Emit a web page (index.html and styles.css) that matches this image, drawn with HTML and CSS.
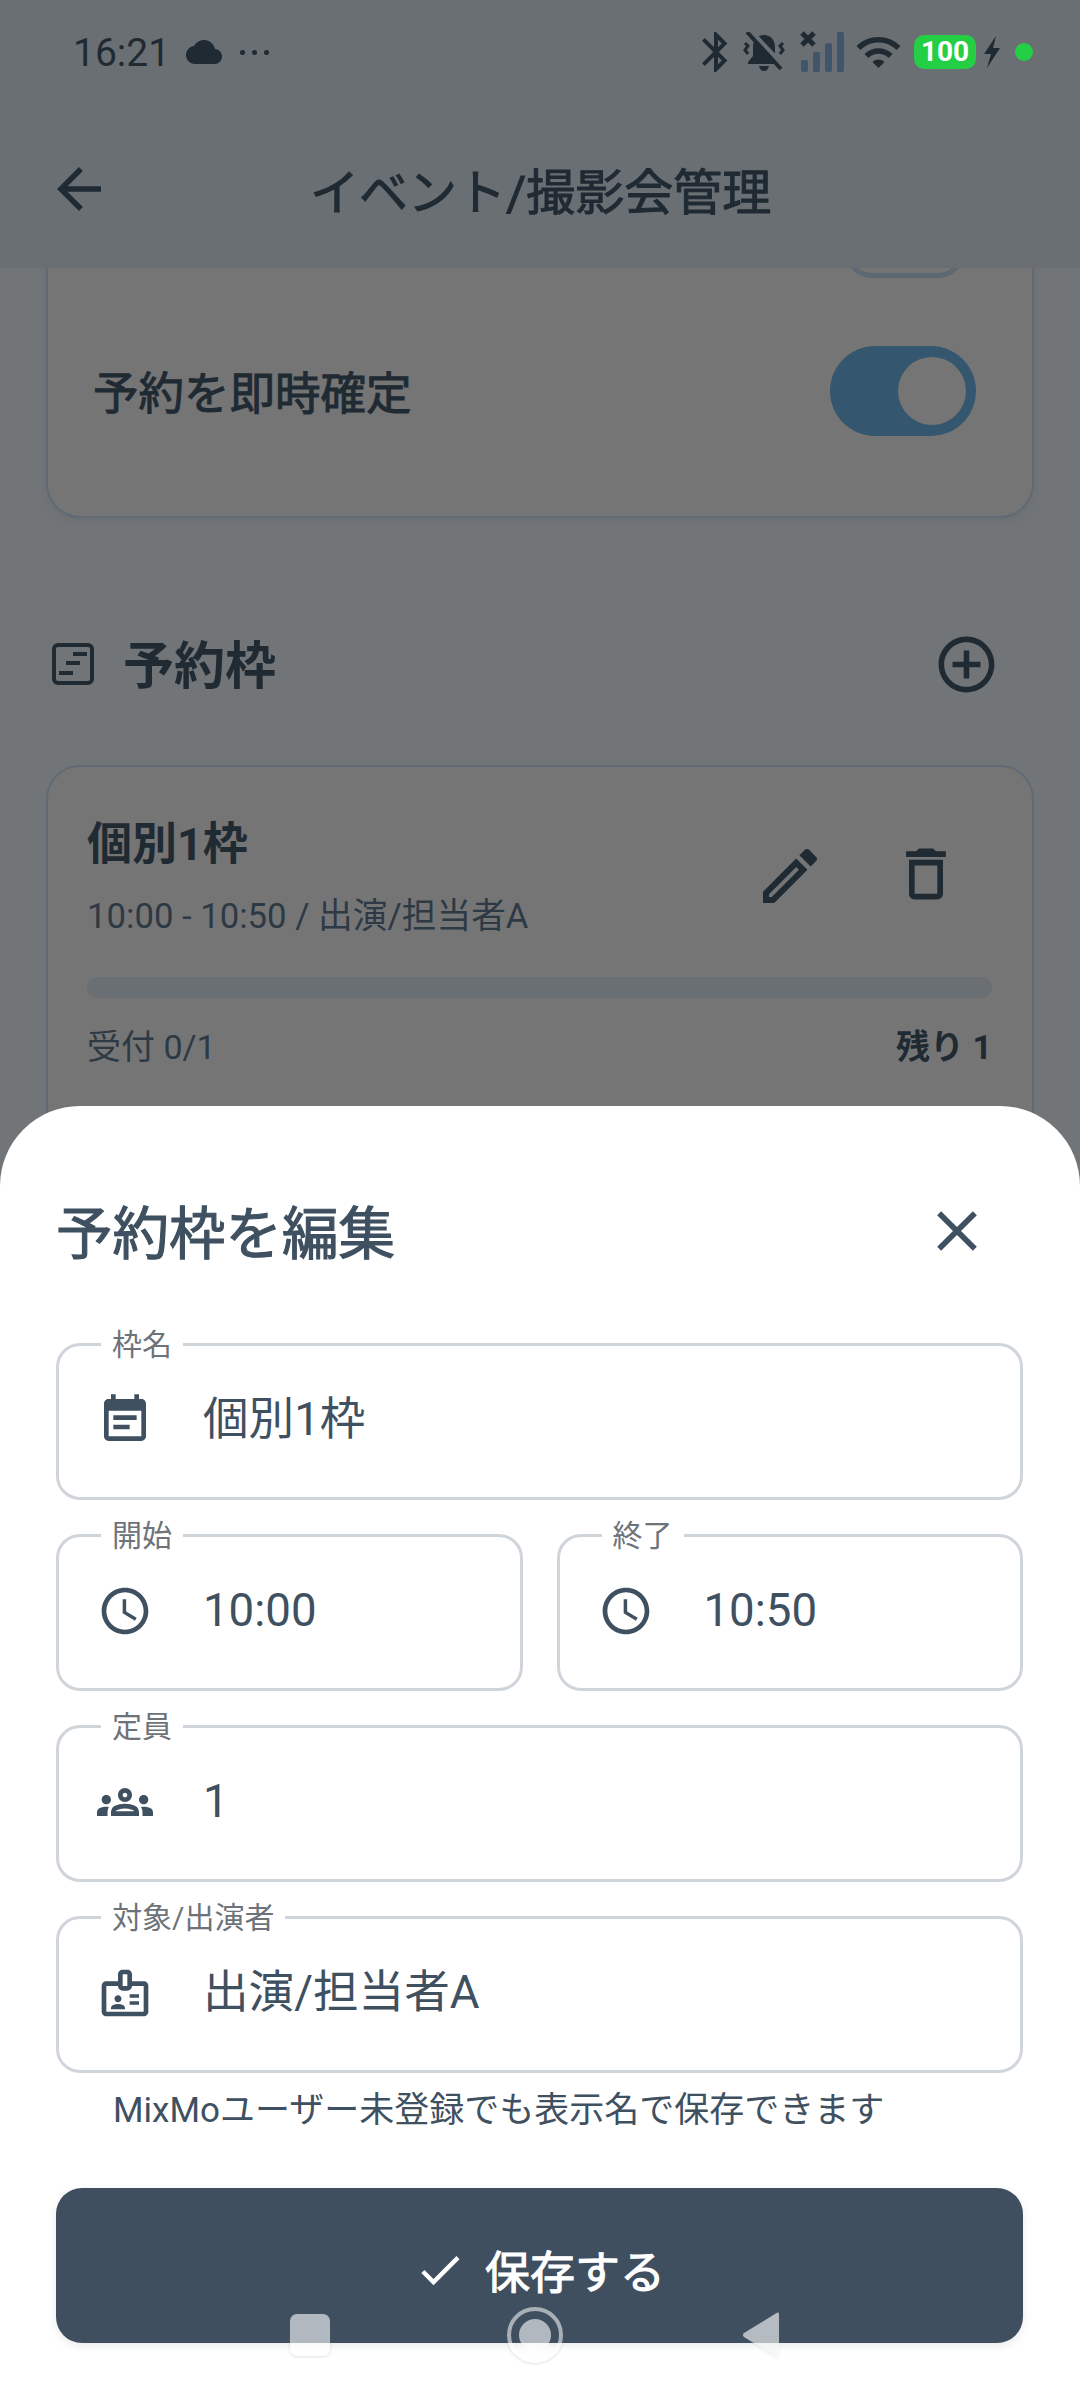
FILE: index.html
```html
<!DOCTYPE html>
<html lang="ja">
<head>
<meta charset="utf-8">
<title>予約枠を編集</title>
<link rel="stylesheet" href="styles.css">
</head>
<body>
<div class="screen">
  <header class="header">
    <div class="status">
      <span class="time">16:21</span>
      <svg class="ic-cloud" viewBox="0 0 24 24"><path d="M19.35 10.04C18.67 6.59 15.64 4 12 4 9.11 4 6.6 5.64 5.35 8.04 2.34 8.36 0 10.91 0 14c0 3.31 2.69 6 6 6h13c2.76 0 5-2.24 5-5 0-2.64-2.05-4.78-4.65-4.96z"/></svg>
      <span class="dots"><i></i><i></i><i></i></span>
      <span class="status-fill"></span>
      <svg class="ic-bt" viewBox="5 2 13 20"><path d="M17.71 7.71 12 2h-1v7.59L6.41 5 5 6.41 10.59 12 5 17.59 6.41 19 11 14.41V22h1l5.71-5.71-4.3-4.29 4.3-4.29zM13 5.83l1.88 1.88L13 9.59V5.83zm1.88 10.46L13 18.17v-3.76l1.88 1.88z"/></svg>
      <svg class="ic-bell" viewBox="0 0 44 40"><path d="M22 3c-7 0-11 5-11 12v9l-5 6v2h32v-2l-5-6v-9c0-7-4-12-11-12z"/><path d="M17 34h10c-.5 3-2.500 5-5 5s-4.500-2-5-5z"/><path class="bell-gap" d="M8 0l32 34"/><path class="bell-slash" d="M5 0l34 37"/><path class="bell-wave" d="M3 11l3 3-3 4 3 4M41 11l-3 3 3 4-3 4"/></svg>
      <svg class="ic-signal" viewBox="0 0 44 42"><path class="sig-x" d="M2 2l12 12M14 2L2 14"/><rect class="sig-bar" x="1" y="29" width="7" height="12" rx="2"/><rect class="sig-bar" x="13" y="21" width="7" height="20" rx="2"/><rect class="sig-bar" x="25" y="12" width="7" height="29" rx="2"/><rect class="sig-bar" x="37" y="1" width="7" height="40" rx="2"/></svg>
      <svg class="ic-wifi" viewBox="1 4 22 16"><path d="M1 9l2 2c4.970-4.970 13.030-4.970 18 0l2-2C16.930 2.930 7.080 2.930 1 9zm8 8 3 3 3-3c-1.650-1.660-4.340-1.660-6 0zm-4-4 2 2c2.760-2.760 7.240-2.760 10 0l2-2C15.140 9.140 8.870 9.140 5 13z"/></svg>
      <span class="battery"><span class="battery-num">100</span></span>
      <svg class="ic-bolt" viewBox="0 0 20 32"><path d="M14 0 2 18h7L5 32 18 12h-7z"/></svg>
      <span class="green-dot"></span>
    </div>
    <div class="appbar">
      <svg class="ic-back" viewBox="0 0 24 24"><path d="M20 11H7.830l5.590-5.590L12 4l-8 8 8 8 1.410-1.410L7.830 13H20v-2z"/></svg>
      <h1 class="appbar-title">イベント/撮影会管理</h1>
    </div>
  </header>

  <main class="content">
    <section class="card card-clipped">
      <div class="toggle-peek"><span class="toggle-peek-shape"></span></div>
      <div class="setting">
        <span class="setting-label">予約を即時確定</span>
        <span class="toggle"><span class="toggle-thumb"></span></span>
      </div>
    </section>

    <div class="section-head">
      <svg class="ic-section" viewBox="0 0 42 42"><rect x="2" y="2" width="38" height="38" rx="4"/><path d="M21 11h14M14 20h14M7 30h14"/></svg>
      <h2 class="section-title">予約枠</h2>
      <svg class="ic-add" viewBox="0 0 24 24"><path d="M13 7h-2v4H7v2h4v4h2v-4h4v-2h-4V7zm-1-5C6.480 2 2 6.480 2 12s4.480 10 10 10 10-4.480 10-10S17.520 2 12 2zm0 18c-4.410 0-8-3.590-8-8s3.590-8 8-8 8 3.590 8 8-3.590 8-8 8z"/></svg>
    </div>

    <section class="card slot">
      <div class="slot-top">
        <div class="slot-info">
          <div class="slot-name">個別1枠</div>
          <div class="slot-sub">10:00 - 10:50 / 出演/担当者A</div>
        </div>
        <svg class="ic-edit" viewBox="0 0 24 24"><path d="M14.060 9.020l.920.920L5.920 19H5v-.920l9.060-9.060M17.660 3c-.250 0-.510.100-.700.290l-1.830 1.830 3.750 3.750 1.830-1.830c.390-.390.390-1.020 0-1.410l-2.340-2.340c-.200-.200-.450-.290-.710-.290zm-3.600 3.190L3 17.250V21h3.750L17.810 9.940l-3.750-3.750z"/></svg>
        <svg class="ic-trash" viewBox="0 0 24 24"><path d="M6 19c0 1.100.900 2 2 2h8c1.100 0 2-.900 2-2V7H6v12zM8 9h8v10H8V9zm7.500-5l-1-1h-5l-1 1H5v2h14V4h-3.500z"/></svg>
      </div>
      <div class="progress"></div>
      <div class="slot-foot">
        <span>受付 0/1</span>
        <span class="slot-left">残り 1</span>
      </div>
    </section>
  </main>

  <section class="sheet">
    <div class="sheet-head">
      <h2 class="sheet-title">予約枠を編集</h2>
      <svg class="ic-close" viewBox="0 0 24 24"><path d="M19 6.410 17.590 5 12 10.590 6.410 5 5 6.410 10.590 12 5 17.590 6.410 19 12 13.410 17.590 19 19 17.590 13.410 12z"/></svg>
    </div>

    <div class="field">
      <span class="field-label">枠名</span>
      <svg class="field-icon" viewBox="0 0 24 24"><path d="M17 10H7v2h10v-2zm2-7h-1V1h-2v2H8V1H6v2H5c-1.110 0-1.990.900-1.990 2L3 19c0 1.100.890 2 2 2h14c1.100 0 2-.900 2-2V5c0-1.100-.900-2-2-2zm0 16H5V8h14v11zm-5-5H7v2h7v-2z"/></svg>
      <span class="field-value">個別1枠</span>
    </div>

    <div class="field-row">
      <div class="field">
        <span class="field-label">開始</span>
        <svg class="field-icon" viewBox="0 0 24 24"><path d="M11.990 2C6.470 2 2 6.480 2 12s4.470 10 9.990 10C17.520 22 22 17.520 22 12S17.520 2 11.990 2zM12 20c-4.420 0-8-3.580-8-8s3.580-8 8-8 8 3.580 8 8-3.580 8-8 8zm.500-13H11v6l5.250 3.150.750-1.230-4.500-2.670z"/></svg>
        <span class="field-value">10:00</span>
      </div>
      <div class="field">
        <span class="field-label">終了</span>
        <svg class="field-icon" viewBox="0 0 24 24"><path d="M11.990 2C6.470 2 2 6.480 2 12s4.470 10 9.990 10C17.520 22 22 17.520 22 12S17.520 2 11.990 2zM12 20c-4.420 0-8-3.580-8-8s3.580-8 8-8 8 3.580 8 8-3.580 8-8 8zm.500-13H11v6l5.250 3.150.750-1.230-4.500-2.670z"/></svg>
        <span class="field-value">10:50</span>
      </div>
    </div>

    <div class="field">
      <span class="field-label">定員</span>
      <svg class="field-icon" viewBox="0 0 24 24"><path d="M4 13c1.100 0 2-.900 2-2s-.900-2-2-2-2 .900-2 2 .900 2 2 2zm1.130 1.100c-.370-.060-.740-.100-1.130-.100-.990 0-1.930.210-2.780.580C.480 14.900 0 15.620 0 16.430V18h4.500v-1.610c0-.830.230-1.610.630-2.290zM20 13c1.100 0 2-.900 2-2s-.900-2-2-2-2 .900-2 2 .900 2 2 2zm4 3.430c0-.810-.480-1.530-1.220-1.850-.850-.370-1.790-.580-2.780-.580-.390 0-.760.040-1.130.100.400.680.630 1.460.630 2.290V18H24v-1.570zm-7.760-2.780C15.070 13.130 13.630 12.750 12 12.750s-3.070.390-4.240.900C6.680 14.130 6 15.210 6 16.390V18h12v-1.610c0-1.180-.680-2.260-1.760-2.740zM8.070 16c.090-.230.130-.390.910-.690.970-.380 1.990-.560 3.020-.56s2.050.180 3.020.56c.770.300.810.460.910.690H8.070zM12 8c.550 0 1 .450 1 1s-.450 1-1 1-1-.450-1-1 .450-1 1-1m0-2c-1.660 0-3 1.340-3 3s1.340 3 3 3 3-1.340 3-3-1.340-3-3-3z"/></svg>
      <span class="field-value">1</span>
    </div>

    <div class="field">
      <span class="field-label">対象/出演者</span>
      <svg class="field-icon" viewBox="0 0 24 24"><path d="M20 7h-5V4c0-1.100-.900-2-2-2h-2c-1.100 0-2 .900-2 2v3H4c-1.100 0-2 .900-2 2v11c0 1.100.900 2 2 2h16c1.100 0 2-.900 2-2V9c0-1.100-.900-2-2-2zM11 4h2v5h-2V4zm9 16H4V9h5c0 1.100.900 2 2 2h2c1.100 0 2-.900 2-2h5v11zm-6-4.500h4V17h-4zm0-3h4V14h-4zM9 16c.830 0 1.500-.670 1.500-1.500S9.830 13 9 13s-1.500.670-1.500 1.500S8.170 16 9 16zm2.080 1.180c-.640-.280-1.340-.430-2.080-.430s-1.440.150-2.080.430C6.310 17.440 6 17.950 6 18.500V19h6v-.500c0-.550-.310-1.060-.920-1.320z"/></svg>
      <span class="field-value">出演/担当者A</span>
    </div>

    <p class="help">MixMoユーザー未登録でも表示名で保存できます</p>

    <button class="save" type="button">
      <svg class="ic-check" viewBox="0 0 24 24"><path d="M9 16.170 4.830 12l-1.420 1.410L9 19 21 7l-1.410-1.410z"/></svg>
      <span>保存する</span>
    </button>
  </section>

  <nav class="navbar">
    <span class="nav-square"></span>
    <span class="nav-circle"><span class="nav-circle-core"></span></span>
    <svg class="nav-back" viewBox="0 0 38 48"><path d="M37 3v42c0 1.500-1.500 2-2.500 1L2 26c-1.500-1-1.500-3 0-4L34.500 2c1-1 2.500-.5 2.500 1z"/></svg>
  </nav>
</div>
</body>
</html>
```

FILE: styles.css
```css
* { box-sizing: border-box; }

html, body {
  margin: 0;
  padding: 0;
  background: #fff;
}

body {
  font-family: Roboto, "Noto Sans CJK JP", sans-serif;
}

h1, h2, p { margin: 0; font-weight: inherit; }

.screen {
  position: relative;
  width: 1080px;
  height: 2400px;
  overflow: hidden;
  background: #727578;
  color: #1f2a33;
}

svg { display: block; fill: currentColor; flex: none; }

/* header */
.header {
  height: 268px;
  background: #6a6f73;
}

.status {
  display: flex;
  align-items: center;
  height: 104px;
  padding: 0 47px 0 73px;
}

.time { padding-top: 2px; font-size: 39px; line-height: 102px; margin-right: 16px; }
.ic-cloud { width: 36px; height: 36px; margin-right: 18px; }
.dots { display: flex; gap: 7px; }
.dots i { width: 5px; height: 5px; border-radius: 50%; background: currentColor; }
.status-fill { flex: 1; }
.ic-bt { width: 26px; height: 40px; margin-right: 14px; }
.ic-bell { width: 44px; height: 40px; margin-right: 14px; }
.ic-bell path { fill: currentColor; }
.ic-bell .bell-gap { fill: none; stroke: #6a6f73; stroke-width: 7; }
.ic-bell .bell-slash { fill: none; stroke: currentColor; stroke-width: 4; }
.ic-bell .bell-wave { fill: none; stroke: currentColor; stroke-width: 3; }
.ic-signal { width: 44px; height: 42px; margin-right: 12px; }
.sig-x { fill: none; stroke: #1f2a33; stroke-width: 5; }
.sig-bar { fill: #40546a; }
.ic-wifi { width: 45px; height: 32px; margin-right: 13px; }
.battery {
  display: flex;
  align-items: center;
  justify-content: center;
  width: 62px;
  height: 34px;
  margin-right: 6px;
  border-radius: 10px;
  background: #24cf46;
}
.battery-num { color: #fff; font-size: 28px; font-weight: 700; line-height: 34px; }
.ic-bolt { width: 20px; height: 32px; margin-right: 13px; }
.green-dot { width: 18px; height: 18px; border-radius: 50%; background: #24cf46; }

.appbar {
  display: flex;
  align-items: center;
  height: 164px;
  padding: 0 0 0 46px;
}
.ic-back { width: 66px; height: 66px; margin-top: 6px; }
.appbar-title {
  margin: 0 0 0 198px;
  padding-top: 16px;
  font-size: 49px;
  line-height: 64px;
  -webkit-text-stroke: 1px currentColor;
}

/* page behind the sheet */
.content { padding: 0 46px; }

.card {
  border: 2px solid #5f6a74;
  border-radius: 34px;
  background: #757575;
}

.card-clipped {
  height: 250px;
  border-top: 0;
  border-top-left-radius: 0;
  border-top-right-radius: 0;
  box-shadow: 0 4px 10px rgba(80, 90, 100, .18);
}

.toggle-peek { height: 10px; overflow: hidden; }
.toggle-peek-shape {
  display: block;
  width: 124px;
  height: 60px;
  margin: -50px 0 0 795px;
  border: 5px solid #5d6872;
  border-radius: 30px;
}

.setting {
  display: flex;
  align-items: center;
  justify-content: space-between;
  padding: 64px 56px 0 45px;
}
.setting-label {
  padding-top: 8px;
  font-size: 45.5px;
  line-height: 90px;
  -webkit-text-stroke: 1px currentColor;
}

.toggle {
  display: flex;
  align-items: center;
  justify-content: flex-end;
  width: 146px;
  height: 90px;
  padding-right: 10px;
  border-radius: 45px;
  background: #34566e;
}
.toggle-thumb { width: 68px; height: 68px; border-radius: 50%; background: #757575; }

.section-head {
  display: flex;
  align-items: center;
  height: 70px;
  margin-top: 111px;
  padding: 0 0 0 6px;
}
.ic-section { width: 42px; height: 42px; fill: none; stroke: currentColor; stroke-width: 4; }
.section-title { margin-left: 29px; padding-top: 6px; font-size: 51px; font-weight: 700; line-height: 70px; }
.ic-add { width: 67px; height: 67px; margin-left: auto; margin-right: 34px; }

.slot {
  height: 390px;
  margin-top: 66px;
  padding: 48px 40px 0 39px;
}
.slot-top { display: flex; align-items: flex-start; height: 162px; }
.slot-info { flex: 1; }
.slot-name { font-size: 45px; font-weight: 700; line-height: 60px; }
.slot-sub { margin-top: 19px; font-size: 34.7px; line-height: 44px; color: #2d3944; }
.ic-edit { width: 72px; height: 72px; margin-top: 25px; }
.ic-trash { width: 68px; height: 68px; margin: 25px 32px 0 66px; }

.progress { height: 21px; border-radius: 10px; background: #6a6f73; }

.slot-foot {
  display: flex;
  justify-content: space-between;
  margin-top: 26px;
  font-size: 34px;
  line-height: 46px;
  color: #2d3944;
}
.slot-left { font-weight: 700; color: #1f2a33; }

/* bottom sheet */
.sheet {
  position: absolute;
  left: 0;
  right: 0;
  top: 1106px;
  bottom: 0;
  display: flex;
  flex-direction: column;
  gap: 34px;
  padding: 0 57px 0 56px;
  border-radius: 80px 80px 0 0;
  background: #fff;
  color: #3f5060;
}
.sheet > * { flex: none; }

.sheet-head {
  display: flex;
  align-items: center;
  justify-content: space-between;
  height: 237px;
  margin-bottom: -34px;
  padding-top: 18px;
}
.sheet-title {
  padding-top: 2px;
  font-size: 56.5px;
  line-height: 70px;
  -webkit-text-stroke: 1.1px currentColor;
}
.ic-close { width: 68px; height: 68px; margin: -5px 32px 0 0; }

.field {
  position: relative;
  display: flex;
  align-items: center;
  height: 157px;
  padding: 0 0 3px 38px;
  border: 3px solid #cfd5da;
  border-radius: 24px;
}
.field-row { display: flex; gap: 34px; }
.field-row .field { flex: 1; }
.field-label {
  position: absolute;
  left: 42px;
  top: -17px;
  padding: 0 11px;
  background: #fff;
  color: #6d7379;
  font-size: 30px;
  line-height: 32px;
}
.field-icon { width: 56px; height: 56px; }
.field-value { margin-left: 50px; font-size: 45.6px; line-height: 60px; }

.help {
  margin-top: -19px;
  padding-left: 57px;
  font-size: 35px;
  line-height: 46px;
}

.save {
  display: flex;
  align-items: center;
  justify-content: center;
  width: 967px;
  height: 155px;
  margin-top: 20px;
  padding: 8px 0 0;
  border: 0;
  border-radius: 26px;
  background: #3f4f5f;
  color: #fff;
  font: inherit;
  font-size: 45px;
  -webkit-text-stroke: 1px currentColor;
  box-shadow: 0 3px 8px rgba(63, 79, 95, .12);
}
.ic-check { width: 52px; height: 52px; margin-right: 19px; }

/* system nav overlay */
.navbar {
  position: absolute;
  left: 0;
  right: 0;
  top: 2300px;
  height: 70px;
  display: flex;
  align-items: center;
  padding-left: 290px;
}
.nav-square {
  width: 40px;
  height: 42px;
  border-radius: 7px;
  background: rgba(255, 255, 255, .6);
  box-shadow: 0 1px 3px rgba(120, 130, 140, .25);
}
.nav-circle {
  display: flex;
  align-items: center;
  justify-content: center;
  width: 56px;
  height: 56px;
  margin-left: 177px;
  border: 4px solid rgba(255, 255, 255, .55);
  border-radius: 50%;
  box-shadow: 0 1px 3px rgba(120, 130, 140, .25);
}
.nav-circle-core { width: 32px; height: 32px; border-radius: 50%; background: rgba(255, 255, 255, .6); }
.nav-back {
  width: 38px;
  height: 48px;
  margin-left: 179px;
  fill: rgba(255, 255, 255, .6);
  filter: drop-shadow(0 1px 1px rgba(120, 130, 140, .25));
}
```
